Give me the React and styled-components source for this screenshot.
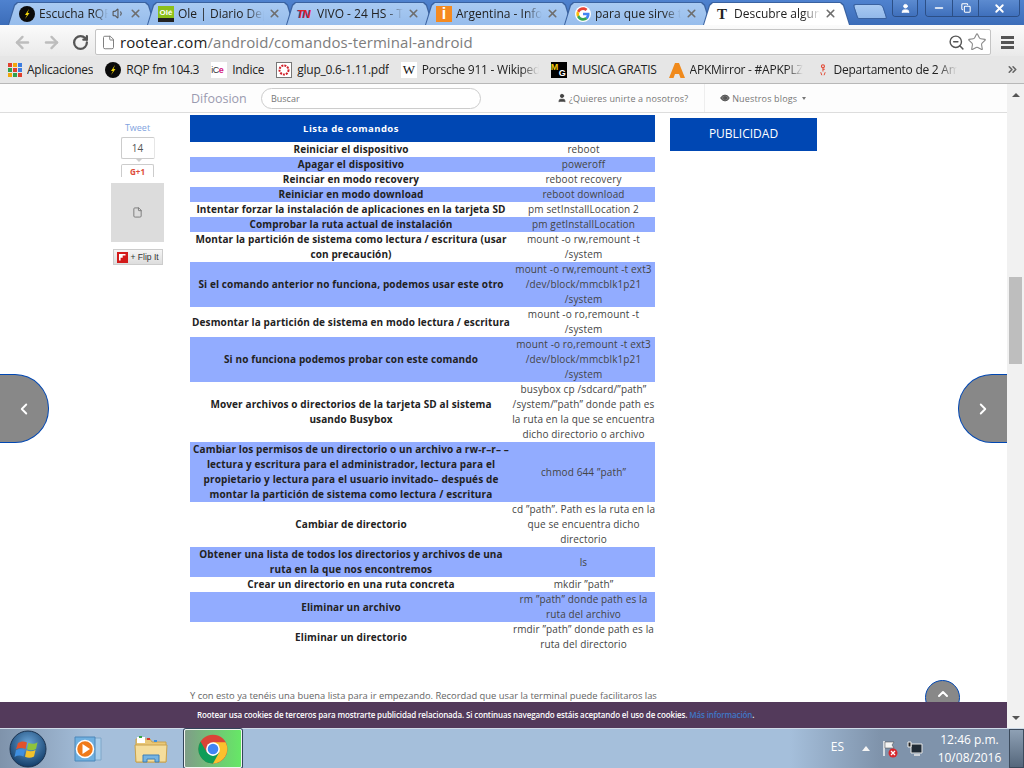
import React from 'react';
import styled, { createGlobalStyle } from 'styled-components';
import { ArrowLeft, ArrowRight, RotateCw, File, ZoomOut, Star, X, Volume1, User, Eye, ChevronLeft, ChevronRight, ChevronUp, ChevronsRight, Minus, Copy } from 'lucide-react';

const GlobalStyle = createGlobalStyle`
  html, body { margin: 0; padding: 0; background: #fff; }
  * { box-sizing: border-box; }
`;

const TABS = [
  { id: 'rqp', title: 'Escucha RQP FM', sound: true },
  { id: 'ole', title: 'Ole | Diario Deportivo' },
  { id: 'tn', title: 'VIVO - 24 HS - TN' },
  { id: 'info', title: 'Argentina - Infobae' },
  { id: 'google', title: 'para que sirve terminal' },
  { id: 't', title: 'Descubre algunos comandos', active: true },
];

const BOOKMARKS = [
  { id: 'apps', title: 'Aplicaciones' },
  { id: 'rqp', title: 'RQP fm 104.3' },
  { id: 'ie', title: 'Indice' },
  { id: 'glup', title: 'glup_0.6-1.11.pdf' },
  { id: 'w', title: 'Porsche 911 - Wikipedia', width: 138 },
  { id: 'mg', title: 'MUSICA GRATIS' },
  { id: 'apk', title: 'APKMirror - #APKPLZ', width: 136 },
  { id: 'depto', title: 'Departamento de 2 Ambientes', width: 140 },
];

const ROWS = [
  ['Reiniciar el dispositivo', 'reboot'],
  ['Apagar el dispositivo', 'poweroff'],
  ['Reinciar en modo recovery', 'reboot recovery'],
  ['Reiniciar en modo download', 'reboot download'],
  ['Intentar forzar la instalación de aplicaciones en la tarjeta SD', 'pm setInstallLocation 2'],
  ['Comprobar la ruta actual de instalación', 'pm getInstallLocation'],
  ['Montar la partición de sistema como lectura / escritura (usar\ncon precaución)', 'mount -o rw,remount -t\n/system'],
  ['Si el comando anterior no funciona, podemos usar este otro', 'mount -o rw,remount -t ext3\n/dev/block/mmcblk1p21\n/system'],
  ['Desmontar la partición de sistema en modo lectura / escritura', 'mount -o ro,remount -t\n/system'],
  ['Si no funciona podemos probar con este comando', 'mount -o ro,remount -t ext3\n/dev/block/mmcblk1p21\n/system'],
  ['Mover archivos o directorios de la tarjeta SD al sistema\nusando Busybox', 'busybox cp /sdcard/”path”\n/system/”path” donde path es\nla ruta en la que se encuentra\ndicho directorio o archivo'],
  ['Cambiar los permisos de un directorio o un archivo a rw-r–r– –\nlectura y escritura para el administrador, lectura para el\npropietario y lectura para el usuario invitado– después de\nmontar la partición de sistema como lectura / escritura', 'chmod 644 ”path”'],
  ['Cambiar de directorio', 'cd ”path”. Path es la ruta en la\nque se encuentra dicho\ndirectorio'],
  ['Obtener una lista de todos los directorios y archivos de una\nruta en la que nos encontremos', 'ls'],
  ['Crear un directorio en una ruta concreta', 'mkdir ”path”'],
  ['Eliminar un archivo', 'rm ”path” donde path es la\nruta del archivo'],
  ['Eliminar un directorio', 'rmdir ”path” donde path es la\nruta del directorio'],
];

const Favicon = ({ id }) => {
  switch (id) {
    case 'rqp':
      return (
        <svg width="16" height="16" viewBox="0 0 16 16">
          <circle cx="8" cy="8" r="8" fill="#0a0a0a" />
          <path d="M10 3 6 9h2l-2 4 4.500-6H8.500z" fill="#f5d90a" />
        </svg>
      );
    case 'ole':
      return <OleIcon>Olé</OleIcon>;
    case 'tn':
      return <TnIcon>TN</TnIcon>;
    case 'info':
      return <InfoIcon>i</InfoIcon>;
    case 'google':
      return (
        <svg width="16" height="16" viewBox="0 0 48 48">
          <circle cx="24" cy="24" r="24" fill="#fff" />
          <path fill="#ea4335" d="M24 12c3 0 5.600 1 7.700 3l5.700-5.700C33.900 6 29.400 4 24 4 16.200 4 9.500 8.500 6.200 15l6.700 5.200C14.400 15.400 18.800 12 24 12z" />
          <path fill="#4285f4" d="M43.600 24.500c0-1.600-.1-2.700-.4-4H24v7.600h11.200c-.5 2.600-2 5-4.400 6.500l6.500 5c3.900-3.600 6.300-8.900 6.300-15.100z" />
          <path fill="#fbbc05" d="M12.900 28.800c-.4-1.200-.6-2.500-.6-3.800s.2-2.600.6-3.800L6.200 15C4.800 17.900 4 20.900 4 24s.8 6.100 2.200 9z" />
          <path fill="#34a853" d="M24 44c5.400 0 9.900-1.800 13.300-4.900l-6.500-5c-1.800 1.200-4 2-6.800 2-5.200 0-9.600-3.400-11.100-8.200L6.200 33C9.500 39.500 16.200 44 24 44z" />
        </svg>
      );
    case 't':
      return <TIcon>T</TIcon>;
    case 'apps':
      return (
        <AppsGrid>
          {['#e0402f', '#f2a60c', '#3c7de0', '#2fa14f', '#e0402f', '#3c7de0', '#f2a60c', '#2fa14f', '#e0402f'].map((c, i) => (
            <AppsDot key={i} $color={c} />
          ))}
        </AppsGrid>
      );
    case 'ie':
      return <IeIcon>iC<b>e</b></IeIcon>;
    case 'glup':
      return (
        <svg width="16" height="16" viewBox="0 0 16 16">
          <rect x=".5" y=".5" width="15" height="15" fill="#fff" stroke="#777" />
          <circle cx="8" cy="8" r="4.500" fill="none" stroke="#d0202a" strokeWidth="2" strokeDasharray="2 1" />
        </svg>
      );
    case 'w':
      return <WikiIcon>W</WikiIcon>;
    case 'mg':
      return <MgIcon><span>M</span><b>G</b></MgIcon>;
    case 'apk':
      return (
        <svg width="16" height="16" viewBox="0 0 16 16">
          <path d="M6 1h4l6 15h-4.500L10 12H6l-1.500 4H0z" fill="#f08a1c" />
        </svg>
      );
    case 'depto':
      return (
        <svg width="16" height="16" viewBox="0 0 16 16">
          <circle cx="8" cy="3" r="2" fill="none" stroke="#e2442f" strokeWidth="1.500" />
          <path d="M8 5v5M8 7h2.500M5 11l1.500 4M11 11l-1.500 4" stroke="#e2442f" strokeWidth="1.300" fill="none" />
        </svg>
      );
    default:
      return null;
  }
};

const WindowsOrb = () => (
  <svg width="38" height="38" viewBox="0 0 38 38">
    <defs>
      <radialGradient id="orb" cx="50%" cy="35%" r="70%">
        <stop offset="0" stopColor="#6aa5d8" />
        <stop offset="1" stopColor="#0c3560" />
      </radialGradient>
    </defs>
    <circle cx="19" cy="19" r="18" fill="url(#orb)" stroke="#1c3350" />
    <path d="M9 13c3-2 6-2 9-.6l-1.500 6.500c-3-1.300-6-1.300-9.500.5z" fill="#e2522c" />
    <path d="M19.500 12.800c3 1.300 6 1.300 9-.6L27 19c-3 1.600-6 1.600-9 .3z" fill="#8fc43c" />
    <path d="M7 20.300c3-1.700 6-1.700 9-.5l-1.500 6.700c-3-1.300-6-1.200-9 .4z" fill="#3f8fe0" />
    <path d="M17.500 20.200c3 1.300 6 1.300 9-.3l-1.500 6.600c-3 1.700-6 1.700-9 .3z" fill="#f4c22c" />
  </svg>
);

const MediaPlayerIcon = () => (
  <svg width="28" height="30" viewBox="0 0 28 30">
    <path d="M7 4h20v22H7z" fill="#a9cdea" stroke="#7fa6c8" />
    <path d="M1 3h20v24H1z" fill="#6fb0e0" stroke="#4c86b8" />
    <circle cx="11" cy="15" r="8.500" fill="#f07a1a" stroke="#fff" strokeWidth="1.500" />
    <path d="M8.500 10l7.500 5-7.500 5z" fill="#fff" />
  </svg>
);

const FolderIcon = () => (
  <svg width="34" height="32" viewBox="0 0 34 32">
    <path d="M2 6h14l2 3h14v20H2z" fill="#e9c877" stroke="#c9a24e" />
    <path d="M3 4h8v6H3z" fill="#fff" />
    <path d="M5 3h3v2H5z" fill="#39a845" />
    <path d="M13 5h3v2h-3z" fill="#d8392e" />
    <path d="M20 7h3v2h-3z" fill="#3b8fe0" />
    <path d="M1 12h32l-1 17H2z" fill="#f4dd9c" stroke="#c9a24e" />
    <path d="M9 29v-7h16v7h-4v-3h-8v3z" fill="#74b4e2" stroke="#3c7fb8" />
  </svg>
);

const ChromeIcon = () => (
  <svg width="30" height="30" viewBox="0 0 48 48">
    <circle cx="24" cy="24" r="23" fill="#db4437" />
    <path d="M24 47A23 23 0 0 0 44 13H24z" fill="#fbc02d" />
    <path d="M24 47 34 29 14 29 4 12A23 23 0 0 0 24 47z" fill="#0f9d58" />
    <circle cx="24" cy="24" r="11" fill="#fff" />
    <circle cx="24" cy="24" r="8.500" fill="#4285f4" />
  </svg>
);

const FlagIcon = () => (
  <svg width="18" height="18" viewBox="0 0 18 18">
    <path d="M3 1v15" stroke="#f4f4f4" strokeWidth="1.500" />
    <path d="M4 2h9l-2 3 2 3H4z" fill="#f4f4f4" stroke="#444" strokeWidth=".5" />
    <circle cx="12" cy="13" r="4.500" fill="#d8262c" />
    <path d="m10 11 4 4m0-4-4 4" stroke="#fff" strokeWidth="1.300" />
  </svg>
);

const NetworkIcon = () => (
  <svg width="18" height="18" viewBox="0 0 18 18">
    <path d="M5 4h11v9H5z" fill="#1f2a35" stroke="#e8e8e8" />
    <path d="M8 15h6" stroke="#e8e8e8" strokeWidth="1.500" />
    <path d="M2 2h3v5H2z" fill="#222" stroke="#eee" />
  </svg>
);

const App = () => {
  return (
    <Screen>
      <GlobalStyle />
      <TabStrip>
        {TABS.map((tab) => (
          <Tab key={tab.id} $active={tab.active}>
            <TabIcon><Favicon id={tab.id} /></TabIcon>
            <TabTitle $active={tab.active}>{tab.title}</TabTitle>
            {tab.sound && <SoundIcon><Volume1 size={13} strokeWidth={2} /></SoundIcon>}
            <TabClose><X size={13} strokeWidth={3} /></TabClose>
          </Tab>
        ))}
        <NewTab />
        <WindowControls>
          <WinGroup><WinButton $w={24}><User size={11} fill="#fff" color="#fff" /></WinButton></WinGroup>
          <WinGroup>
            <WinButton $w={26}><Minus size={12} strokeWidth={3} color="#fff" /></WinButton>
            <WinButton $w={26}><Copy size={10} strokeWidth={2.500} color="#fff" /></WinButton>
            <WinButton $w={41} $close><X size={13} strokeWidth={3.500} color="#fff" /></WinButton>
          </WinGroup>
        </WindowControls>
      </TabStrip>

      <Toolbar>
        <NavIcon $muted><ArrowLeft size={19} strokeWidth={3} /></NavIcon>
        <NavIcon $muted><ArrowRight size={19} strokeWidth={3} /></NavIcon>
        <NavIcon><RotateCw size={17} strokeWidth={3.200} /></NavIcon>
        <AddressBar>
          <File size={15} color="#777" strokeWidth={1.500} />
          <Url><b>rootear.com</b>/android/comandos-terminal-android</Url>
          <AddressIcons>
            <ZoomOut size={17} color="#555" strokeWidth={2} />
            <Star size={20} color="#888" strokeWidth={1.300} />
          </AddressIcons>
        </AddressBar>
        <Hamburger><i /><i /><i /></Hamburger>
      </Toolbar>

      <BookmarkBar>
        {BOOKMARKS.map((b) => (
          <Bookmark key={b.id} $w={b.width}>
            <Favicon id={b.id} />
            <BookmarkLabel $fade={Boolean(b.width)}>{b.title}</BookmarkLabel>
          </Bookmark>
        ))}
        <BookmarkMore><ChevronsRight size={13} strokeWidth={3} /></BookmarkMore>
      </BookmarkBar>

      <Viewport>
        <Page>
          <SiteNav>
            <Brand>Difoosion</Brand>
            <SearchBox>Buscar</SearchBox>
            <NavLink $left={76}><User size={10} fill="#444" color="#444" />¿Quieres unirte a nosotros?</NavLink>
            <NavDivider />
            <NavLink $left={15}><Eye size={10} color="#444" fill="#777" />Nuestros blogs<Caret /></NavLink>
          </SiteNav>
          <Body>
            <ShareColumn>
              <TweetLabel>Tweet</TweetLabel>
              <CountBox>14</CountBox>
              <PlusBox>G+1</PlusBox>
              <AdBox><File size={11} color="#777" /></AdBox>
              <FlipButton><FlipLogo><i /></FlipLogo>+ Flip It</FlipButton>
            </ShareColumn>
            <Article>
              <CommandTable>
                <thead>
                  <tr>
                    <HeadCell>Lista de comandos</HeadCell>
                    <HeadCell />
                  </tr>
                </thead>
                <tbody>
                  {ROWS.map(([label, cmd], i) => (
                    <CommandRow key={label} $odd={i % 2 === 1}>
                      <LabelCell>{label}</LabelCell>
                      <CommandCell>{cmd}</CommandCell>
                    </CommandRow>
                  ))}
                </tbody>
              </CommandTable>
              <Closing>Y con esto ya tenéis una buena lista para ir empezando. Recordad que usar la terminal puede facilitaros las</Closing>
            </Article>
            <Aside>
              <AdTitle>PUBLICIDAD</AdTitle>
            </Aside>
          </Body>
          <SideArrow $side="left"><ChevronLeft size={18} strokeWidth={2.500} /></SideArrow>
          <SideArrow $side="right"><ChevronRight size={18} strokeWidth={2.500} /></SideArrow>
          <TopButton><ChevronUp size={16} strokeWidth={3} /></TopButton>
          <CookieBar>
            Rootear usa cookies de terceros para mostrarte publicidad relacionada. Si continuas navegando estáis aceptando el uso de cookies. <CookieLink>Más información</CookieLink>.
          </CookieBar>
        </Page>
        <Scrollbar>
          <ScrollArrow $up />
          <ScrollThumb />
          <ScrollArrow />
        </Scrollbar>
      </Viewport>

      <Taskbar>
        <Orb><WindowsOrb /></Orb>
        <TaskItem $w={61}><MediaPlayerIcon /></TaskItem>
        <TaskItem $w={66}><FolderIcon /></TaskItem>
        <ActiveTask><ChromeIcon /></ActiveTask>
        <Tray>
          <Lang>ES</Lang>
          <TrayUp />
          <TrayIcons><FlagIcon /><NetworkIcon /></TrayIcons>
          <Clock>12:46 p.m.<br />10/08/2016</Clock>
          <ShowDesktop />
        </Tray>
      </Taskbar>
    </Screen>
  );
};
export default App;

const Screen = styled.div`
  width: 1024px;
  height: 768px;
  display: flex;
  flex-direction: column;
  overflow: hidden;
  font-family: "Open Sans", "Liberation Sans", sans-serif;
`;

const TabStrip = styled.div`
  height: 25px;
  flex: none;
  display: flex;
  align-items: flex-end;
  padding-left: 8px;
  background: linear-gradient(#4f82cf, #3c6db9);
`;

const Tab = styled.div`
  position: relative;
  width: 147px;
  height: 23px;
  margin-right: -8px;
  padding: 0 13px 0 11px;
  display: flex;
  align-items: center;
  gap: 4px;
  z-index: ${(p) => (p.$active ? 2 : 1)};

  &::before, &::after {
    content: "";
    position: absolute;
    inset: 0;
    clip-path: polygon(0 100%, 6px 12%, 9px 0, calc(100% - 9px) 0, calc(100% - 6px) 12%, 100% 100%);
    z-index: -1;
  }
  &::before { background: #3a62a0; }
  &::after {
    inset: 1px 1px 0 1px;
    background: ${(p) => (p.$active ? '#fff' : 'linear-gradient(#a9caf2, #97bdec)')};
  }
`;

const TabIcon = styled.span`
  width: 16px;
  height: 16px;
  flex: none;
  display: flex;
`;

const TabTitle = styled.span`
  flex: 1;
  min-width: 0;
  overflow: hidden;
  white-space: nowrap;
  font-size: 12px;
  color: #222;
  -webkit-mask-image: linear-gradient(to right, #000 80%, transparent 100%);
  mask-image: linear-gradient(to right, #000 80%, transparent 100%);
`;

const SoundIcon = styled.span`
  display: flex;
  color: #555;
  flex: none;
`;

const TabClose = styled.span`
  display: flex;
  flex: none;
  color: #6e6e6e;
`;

const NewTab = styled.div`
  width: 30px;
  height: 15px;
  margin: 0 0 6px 13px;
  border-radius: 3px 4px 2px 2px;
  background: linear-gradient(#a9caf2, #92b9ea);
  border: 1px solid #3a62a0;
  transform: skewX(18deg);
`;

const WindowControls = styled.div`
  margin-left: auto;
  align-self: flex-start;
  display: flex;
  gap: 7px;
  padding-right: 4px;
`;

const WinGroup = styled.div`
  display: flex;
  height: 17px;
  border: 1px solid #2c4f86;
  border-top: 0;
  border-radius: 0 0 4px 4px;
  overflow: hidden;
`;

const WinButton = styled.span`
  width: ${(p) => p.$w}px;
  display: flex;
  align-items: center;
  justify-content: center;
  background: linear-gradient(#5c8bd0, #3f70bc);
  border-left: 1px solid #2c4f86;
  &:first-child { border-left: 0; }
`;

const Toolbar = styled.div`
  height: 31px;
  flex: none;
  display: flex;
  align-items: center;
  padding: 3px 7px 0 8px;
  background: linear-gradient(#fbfbfb, #eaeaea);
`;

const NavIcon = styled.span`
  width: 29px;
  display: flex;
  justify-content: center;
  color: ${(p) => (p.$muted ? '#bdbdbd' : '#555')};
`;

const AddressBar = styled.div`
  width: 896px;
  height: 26px;
  padding: 0 3px 0 5px;
  display: flex;
  align-items: center;
  gap: 4px;
  background: #fff;
  border: 1px solid #c4c4c4;
  border-radius: 2px;
`;

const Url = styled.span`
  flex: 1;
  font-size: 15px;
  letter-spacing: 0.09px;
  color: #7d7d7d;
  white-space: nowrap;
  b { font-weight: 400; color: #222; }
`;

const AddressIcons = styled.span`
  display: flex;
  align-items: center;
  gap: 2px;
`;

const Hamburger = styled.span`
  margin-left: 10px;
  display: flex;
  flex-direction: column;
  gap: 2px;
  i { display: block; width: 13px; height: 3px; background: #555; }
`;

const BookmarkBar = styled.div`
  height: 28px;
  flex: none;
  display: flex;
  align-items: center;
  gap: 12px;
  padding-left: 8px;
  background: #e6e6e6;
  border-bottom: 1px solid #b8b8b8;
`;

const Bookmark = styled.div`
  ${(p) => (p.$w ? `width: ${p.$w}px;` : '')}
  flex: none;
  display: flex;
  align-items: center;
  gap: 5px;
  overflow: hidden;
`;

const BookmarkLabel = styled.span`
  font-size: 12px;
  letter-spacing: -0.25px;
  color: #222;
  white-space: nowrap;
  overflow: hidden;
  ${(p) => (p.$fade ? `
    -webkit-mask-image: linear-gradient(to right, #000 85%, transparent 100%);
    mask-image: linear-gradient(to right, #000 85%, transparent 100%);
  ` : '')}
`;

const BookmarkMore = styled.span`
  margin-left: auto;
  margin-right: 5px;
  display: flex;
  color: #666;
`;

const Viewport = styled.div`
  flex: 1;
  min-height: 0;
  display: flex;
`;

const Page = styled.div`
  position: relative;
  flex: 1;
  min-width: 0;
  overflow: hidden;
  background: #fff;
`;

const SiteNav = styled.div`
  height: 29px;
  display: flex;
  align-items: center;
  padding-left: 191px;
  background: #fdfdfd;
  border-bottom: 1px solid #ddd;
`;

const Brand = styled.span`
  width: 70px;
  font-size: 12.500px;
  color: #9a9ab0;
`;

const SearchBox = styled.div`
  width: 220px;
  height: 21px;
  padding-left: 9px;
  display: flex;
  align-items: center;
  font-size: 9px;
  color: #777;
  background: #fff;
  border: 1px solid #ccc;
  border-radius: 11px;
`;

const NavLink = styled.span`
  margin-left: ${(p) => p.$left}px;
  display: flex;
  align-items: center;
  gap: 2px;
  font-size: 9px;
  letter-spacing: 0.15px;
  color: #777;
  white-space: nowrap;
`;

const NavDivider = styled.span`
  width: 1px;
  height: 28px;
  margin-left: 16px;
  background: #eee;
`;

const Caret = styled.span`
  width: 0;
  height: 0;
  margin-left: 3px;
  border: 2px solid transparent;
  border-top: 3px solid #777;
  border-bottom: 0;
`;

const Body = styled.div`
  display: flex;
  align-items: flex-start;
  padding: 2px 0 0 111px;
`;

const ShareColumn = styled.div`
  width: 53px;
  margin-right: 26px;
  padding-top: 7px;
  display: flex;
  flex-direction: column;
  align-items: center;
`;

const TweetLabel = styled.span`
  font-size: 9px;
  line-height: 12px;
  color: #7fa3e0;
`;

const CountBox = styled.div`
  position: relative;
  width: 34px;
  height: 22px;
  margin-top: 3px;
  display: flex;
  align-items: center;
  justify-content: center;
  font-size: 10px;
  color: #555;
  border: 1px solid #ccc;
  border-right-color: #e6e6e6;
  border-radius: 2px;

  &::after {
    content: "";
    position: absolute;
    left: 14px;
    bottom: -4px;
    border: 3px solid transparent;
    border-top-color: #ccc;
    border-bottom: 0;
  }
`;

const PlusBox = styled.div`
  width: 33px;
  height: 13px;
  margin-top: 5px;
  display: flex;
  align-items: center;
  justify-content: center;
  font-size: 8px;
  font-weight: 700;
  color: #dd4b39;
  border: 1px solid #ccc;
  border-bottom: 0;
  border-radius: 2px 2px 0 0;
`;

const AdBox = styled.div`
  width: 53px;
  height: 59px;
  margin-top: 6px;
  display: flex;
  align-items: center;
  justify-content: center;
  background: #dcdcdc;
`;

const FlipButton = styled.div`
  width: 50px;
  height: 16px;
  margin-top: 7px;
  padding-left: 3px;
  display: flex;
  align-items: center;
  gap: 3px;
  font-family: "Liberation Sans", sans-serif;
  font-size: 8.500px;
  color: #333;
  white-space: nowrap;
  background: linear-gradient(#f5f5f5, #ddd);
  border: 1px solid #ccc;
`;

const FlipLogo = styled.span`
  width: 11px;
  height: 11px;
  flex: none;
  padding: 2px;
  background: #d31a1a;
  i { display: block; width: 7px; height: 7px; background: #fff; clip-path: polygon(0 0, 100% 0, 100% 30%, 60% 30%, 60% 60%, 30% 60%, 30% 100%, 0 100%); }
`;

const Article = styled.div`
  width: 465px;
  margin-right: 15px;
`;

const CommandTable = styled.table`
  width: 465px;
  table-layout: fixed;
  border-collapse: collapse;
`;

const HeadCell = styled.th`
  height: 27px;
  padding: 0;
  font-size: 9.500px;
  font-weight: 700;
  letter-spacing: 0.45px;
  text-align: center;
  color: #fff;
  background: #0047b3;
  &:first-child { width: 322px; }
`;

const CommandRow = styled.tr`
  background: ${(p) => (p.$odd ? '#92acff' : '#fff')};
`;

const LabelCell = styled.td`
  padding: 0;
  font-size: 10px;
  font-weight: 700;
  line-height: 15px;
  letter-spacing: 0.12px;
  text-align: center;
  white-space: pre;
  color: #222;
`;

const CommandCell = styled.td`
  padding: 0;
  font-size: 10px;
  line-height: 15px;
  letter-spacing: 0.13px;
  text-align: center;
  white-space: pre;
  color: #444;
`;

const Closing = styled.p`
  margin: 36px 0 0;
  font-size: 9.400px;
  line-height: 15px;
  color: #666;
  white-space: nowrap;
`;

const Aside = styled.div`
  width: 147px;
  padding-top: 3px;
`;

const AdTitle = styled.div`
  height: 33px;
  padding-bottom: 2px;
  display: flex;
  align-items: center;
  justify-content: center;
  font-size: 12px;
  color: #fff;
  background: #0047b3;
`;

const SideArrow = styled.div`
  position: absolute;
  top: 290px;
  ${(p) => (p.$side === 'left' ? 'left: 0;' : 'right: 0;')}
  width: 49px;
  height: 69px;
  display: flex;
  align-items: center;
  justify-content: center;
  color: #fff;
  background: #888;
  border: 1px solid #0047b3;
  ${(p) => (p.$side === 'left'
    ? 'border-left: 0; border-radius: 0 34px 34px 0;'
    : 'border-right: 0; border-radius: 34px 0 0 34px;')}
`;

const TopButton = styled.div`
  position: absolute;
  left: 925px;
  top: 596px;
  width: 35px;
  height: 35px;
  padding-top: 5px;
  display: flex;
  justify-content: center;
  align-items: flex-start;
  color: #fff;
  background: #888;
  border: 1px solid #0047b3;
  border-radius: 50%;
`;

const CookieBar = styled.div`
  position: absolute;
  left: 0;
  right: 0;
  bottom: 0;
  height: 26px;
  padding-left: 197px;
  font-size: 8px;
  font-weight: 600;
  line-height: 26px;
  letter-spacing: -0.13px;
  white-space: nowrap;
  color: #fff;
  background: #533a5b;
`;

const CookieLink = styled.span`
  color: #3f78c8;
`;

const Scrollbar = styled.div`
  width: 17px;
  flex: none;
  display: flex;
  flex-direction: column;
  align-items: center;
  background: #f1f1f1;
`;

const ScrollThumb = styled.div`
  width: 13px;
  height: 87px;
  margin-top: 180px;
  margin-bottom: auto;
  background: #bebebe;
`;

const ScrollArrow = styled.div`
  width: 0;
  height: 0;
  margin: ${(p) => (p.$up ? '9px 0 0' : '0 0 8px')};
  border: 4px solid transparent;
  ${(p) => (p.$up ? 'border-bottom: 4px solid #555; border-top: 0;' : 'border-top: 4px solid #555; border-bottom: 0;')}
`;

const Taskbar = styled.div`
  height: 40px;
  flex: none;
  display: flex;
  align-items: center;
  padding-left: 9px;
  background: linear-gradient(to right, #7f93ab 0, #a5bfdb 90px, #a5bfdb 790px, #7f93ab 880px);
  border-top: 1px solid #cfdbe8;
`;

const Orb = styled.div`
  width: 48px;
  display: flex;
`;

const TaskItem = styled.div`
  width: ${(p) => p.$w}px;
  display: flex;
  justify-content: center;
`;

const ActiveTask = styled.div`
  width: 58px;
  height: 39px;
  display: flex;
  align-items: center;
  justify-content: center;
  background: linear-gradient(to right, #7f9d88, #66e866);
  border: 1px solid #f0f4f0;
  border-radius: 2px;
  box-shadow: 0 0 0 1px #33445a;
`;

const Tray = styled.div`
  margin-left: auto;
  height: 100%;
  display: flex;
  align-items: center;
  color: #fff;
`;

const Lang = styled.span`
  font-size: 12px;
  margin: 0 18px 5px 0;
`;

const TrayUp = styled.span`
  width: 0;
  height: 0;
  margin-right: 11px;
  border: 4px solid transparent;
  border-bottom: 5px solid #f4f4f4;
  border-top: 0;
`;

const TrayIcons = styled.span`
  display: flex;
  gap: 7px;
`;

const Clock = styled.span`
  width: 73px;
  margin-left: 9px;
  font-size: 12px;
  line-height: 18px;
  text-align: center;
`;

const ShowDesktop = styled.span`
  width: 15px;
  height: 39px;
  margin-left: 3px;
  background: linear-gradient(#8ea0b4, #55677c);
  border: 1px solid #3b4a5c;
`;

const OleIcon = styled.span`
  width: 16px;
  height: 16px;
  font-family: "Liberation Sans", sans-serif;
  font-size: 8px;
  font-weight: 700;
  line-height: 14px;
  text-align: center;
  color: #fff;
  background: linear-gradient(#8cc01a 75%, #222 75%);
`;

const TnIcon = styled.span`
  width: 16px;
  font-family: "Liberation Sans", sans-serif;
  font-size: 11px;
  font-weight: 700;
  font-style: italic;
  line-height: 16px;
  letter-spacing: -1px;
  color: #e0202a;
  text-shadow: -1px 0 #2a6fd0;
`;

const InfoIcon = styled.span`
  width: 16px;
  height: 16px;
  font-family: "Liberation Sans", sans-serif;
  font-size: 16px;
  font-weight: 700;
  line-height: 16px;
  text-align: center;
  color: #fff;
  background: #f58a1f;
`;

const TIcon = styled.span`
  width: 16px;
  font-family: "Liberation Serif", serif;
  font-size: 15px;
  font-weight: 700;
  line-height: 16px;
  text-align: center;
  color: #222;
`;

const AppsGrid = styled.span`
  width: 14px;
  height: 14px;
  flex: none;
  display: grid;
  grid-template-columns: repeat(3, 1fr);
  gap: 1px;
`;

const AppsDot = styled.i`
  background: ${(p) => p.$color};
`;

const IeIcon = styled.span`
  width: 16px;
  height: 16px;
  flex: none;
  overflow: hidden;
  font-family: "Liberation Sans", sans-serif;
  font-size: 9px;
  line-height: 16px;
  letter-spacing: -0.5px;
  color: #333;
  background: #fff;
  b { color: #d3197f; font-weight: 700; }
`;

const WikiIcon = styled.span`
  width: 16px;
  height: 16px;
  flex: none;
  font-family: "Liberation Serif", serif;
  font-size: 13px;
  line-height: 16px;
  text-align: center;
  color: #111;
  background: #fff;
`;

const MgIcon = styled.span`
  position: relative;
  width: 16px;
  height: 16px;
  flex: none;
  font-family: "Liberation Sans", sans-serif;
  font-size: 9px;
  font-weight: 700;
  line-height: 10px;
  background: #000;
  span { color: #f2c80f; }
  b { position: absolute; right: 1px; bottom: 0; color: #fff; }
`;
